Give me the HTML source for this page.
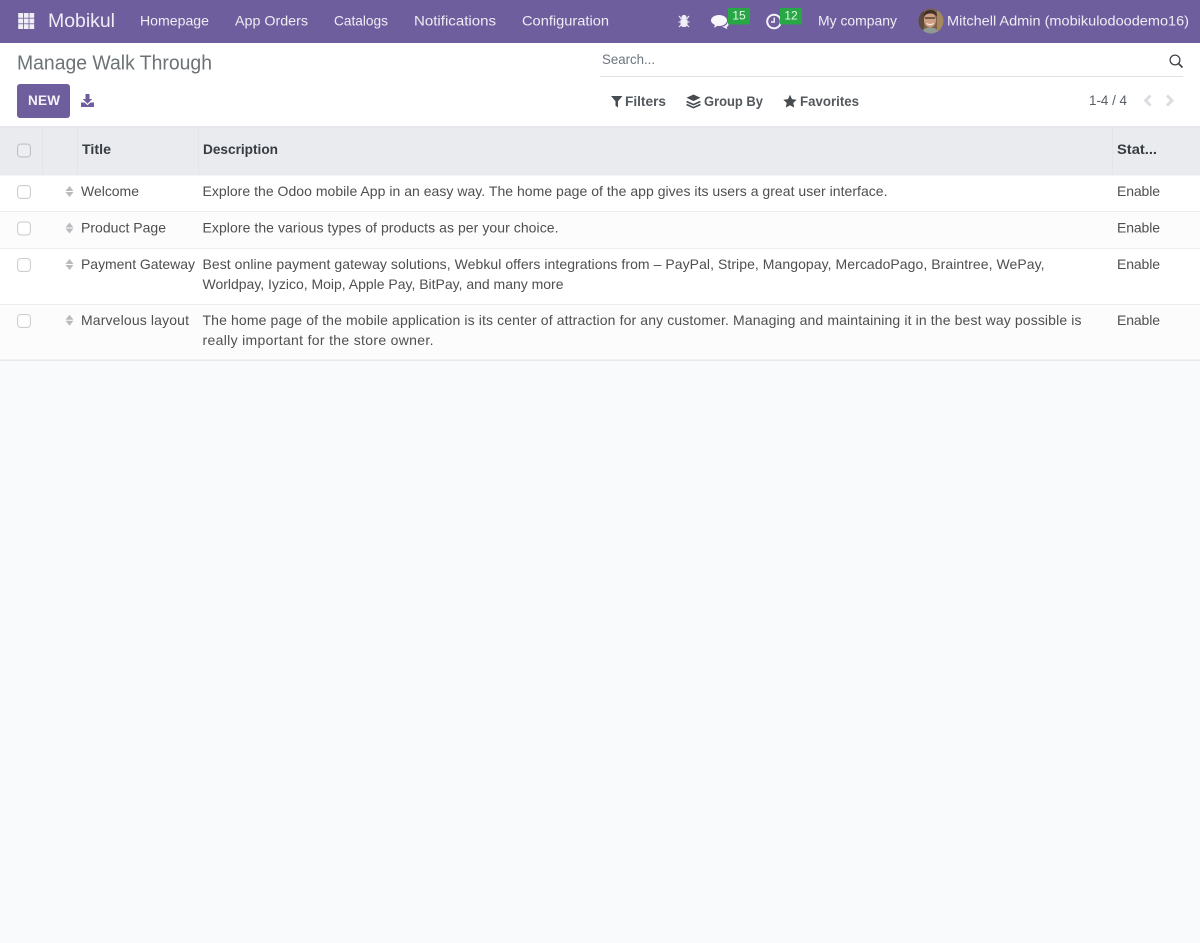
<!DOCTYPE html>
<html lang="en"><head><meta charset="utf-8"><title>Manage Walk Through</title>
<style>
html,body{margin:0;padding:0;width:1200px;height:943px;overflow:hidden;background:#f9fafb}
svg{display:block}
text{font-family:"Liberation Sans","DejaVu Sans",sans-serif;font-size:14px;fill:#4f4f4f}
.n{fill:#efecf4}
.h{font-weight:700;fill:#373c41}
.m{fill:#53585d;font-weight:700;font-size:13.5px}
</style></head><body>
<svg width="1200" height="943" viewBox="0 0 1200 943" xmlns="http://www.w3.org/2000/svg">
<rect width="1200" height="943" fill="#f9fafb"/>
<!-- navbar -->
<rect width="1200" height="43" fill="#6f5e9e"/>
<g fill="#f1eff6">
<rect x="18.200" y="13" width="4.800" height="4.800"/><rect x="23.800" y="13" width="4.800" height="4.800"/><rect x="29.400" y="13" width="4.800" height="4.800"/>
<rect x="18.200" y="18.600" width="4.800" height="4.800"/><rect x="23.800" y="18.600" width="4.800" height="4.800"/><rect x="29.400" y="18.600" width="4.800" height="4.800"/>
<rect x="18.200" y="24.200" width="4.800" height="4.800"/><rect x="23.800" y="24.200" width="4.800" height="4.800"/><rect x="29.400" y="24.200" width="4.800" height="4.800"/>
</g>
<text class="n" x="48" y="27" style="font-size:19px" textLength="67" lengthAdjust="spacingAndGlyphs">Mobikul</text>
<text class="n" x="140" y="25.500" textLength="69" lengthAdjust="spacingAndGlyphs">Homepage</text>
<text class="n" x="235" y="25.500" textLength="73" lengthAdjust="spacingAndGlyphs">App Orders</text>
<text class="n" x="334" y="25.500" textLength="54" lengthAdjust="spacingAndGlyphs">Catalogs</text>
<text class="n" x="414" y="25.500" textLength="82" lengthAdjust="spacingAndGlyphs">Notifications</text>
<text class="n" x="522" y="25.500" textLength="87" lengthAdjust="spacingAndGlyphs">Configuration</text>
<!-- bug -->
<g fill="#f1eff6" stroke="none">
<circle cx="684" cy="17.500" r="2.600"/>
<path d="M680.500 19.500h7v4.200q0 3.300-3.500 3.300t-3.500-3.300z"/>
</g>
<path d="M679 16l2.500 3M689 16l-2.500 3M678.500 22h3M686.500 22h3M679 27l2.200-2.200M689 27l-2.200-2.200" stroke="#f1eff6" stroke-width="1.100" fill="none"/>
<!-- chat -->
<path d="M719 15c4.700 0 8 2.500 8 5.500s-3.300 5.500-8 5.500l-1.700-.1-3.300 2 .9-3c-2.300-1-3.900-2.600-3.900-4.400 0-3 3.300-5.500 8-5.500z" fill="#f7f6fa"/>
<path d="M728 19.500c.6 3.500-2 6.500-6 7.300l2.500 1 2.800 1.500-.5-2.300c1.300-.8 2-2 2-3.300 0-1.700-.3-3.200-.8-4.200z" fill="#f1eff6"/>
<rect x="728" y="8" width="22" height="16.500" rx="1" fill="#28a745"/>
<text x="739" y="19.500" text-anchor="middle" style="font-size:12px;fill:#eaf6ec">15</text>
<!-- clock -->
<circle cx="774" cy="21.500" r="6.800" fill="none" stroke="#f4f2f8" stroke-width="2"/>
<path d="M774.200 17.500v4.500h-3.200" fill="none" stroke="#f4f2f8" stroke-width="1.400"/>
<rect x="780" y="8" width="22" height="16.500" rx="1" fill="#28a745"/>
<text x="791" y="19.500" text-anchor="middle" style="font-size:12px;fill:#eaf6ec">12</text>
<text class="n" x="818" y="25.500" textLength="79" lengthAdjust="spacingAndGlyphs">My company</text>
<!-- avatar -->
<clipPath id="av"><circle cx="931" cy="21" r="12.500"/></clipPath>
<g clip-path="url(#av)">
<rect x="918" y="8" width="26" height="26" fill="#7b6148"/>
<rect x="937" y="8" width="7" height="26" fill="#a5885f"/>
<rect x="918" y="8" width="6" height="26" fill="#5b4a3d"/>
<path d="M921 34c1-5 5-6.500 9-6.500s8 1.500 10 6.500z" fill="#8f9a94"/>
<ellipse cx="930" cy="20" rx="6" ry="7.500" fill="#cf9d80"/>
<path d="M923.500 17c0-5 3-7 7-7s6.500 2.500 6.500 6.500c-2-2.500-4-3-7-3s-4.500 1-6.500 3.500z" fill="#3d2f29"/>
<path d="M925 18h10" stroke="#3a2f2b" stroke-width="1.200"/>
<path d="M926.500 23.500q3.500 2.200 7 0" stroke="#f4ebe4" stroke-width="1.300" fill="none"/>
</g>
<text class="n" x="947" y="25.500" textLength="242" lengthAdjust="spacingAndGlyphs">Mitchell Admin (mobikulodoodemo16)</text>
<!-- control panel -->
<rect y="43" width="1200" height="84" fill="#fff"/>
<text x="17" y="69.500" style="font-size:20.500px;fill:#6b7377" textLength="195" lengthAdjust="spacingAndGlyphs">Manage Walk Through</text>
<rect x="600" y="76" width="583" height="1" fill="#dee2e6"/>
<text x="602" y="64" style="fill:#6c757d" textLength="53" lengthAdjust="spacingAndGlyphs">Search...</text>
<circle cx="1175" cy="60" r="4.900" fill="none" stroke="#3f4348" stroke-width="1.300"/>
<path d="M1178.500 63.500l4 4" stroke="#3f4348" stroke-width="1.700"/>
<rect x="17" y="84" width="53" height="34" rx="3" fill="#6f5e9e"/>
<text x="28" y="105" style="font-size:13.500px;font-weight:700;fill:#f5f3f8" textLength="32">NEW</text>
<!-- download -->
<path d="M85.500 94h4v5h2.800l-4.800 4.800-4.800-4.800h2.800z" fill="#6f5e9e"/>
<path d="M81 102.500h3.500l3 2.800 3-2.800h3.500v4.500h-13z" fill="#6f5e9e"/>
<!-- filters -->
<path d="M611 96h11.500l-4.500 5.200v6.300l-2.500-1.800v-4.500z" fill="#474c51"/>
<text class="m" x="625" y="106" textLength="41" lengthAdjust="spacingAndGlyphs">Filters</text>
<path d="M693.500 94.500l7 3.300-7 3.300-7-3.300z" fill="#474c51"/>
<path d="M687 100.800l6.500 3 6.500-3 .8 1.400-7.300 3.300-7.300-3.300zM687 103.800l6.500 3 6.500-3 .8 1.400-7.300 3.300-7.300-3.300z" fill="#474c51"/>
<text class="m" x="704" y="106" textLength="59" lengthAdjust="spacingAndGlyphs">Group By</text>
<path d="M790 94.800l2 4.300 4.700.6-3.400 3.200.9 4.700-4.200-2.300-4.200 2.300.9-4.700-3.400-3.200 4.700-.6z" fill="#474c51"/>
<text class="m" x="800" y="106" textLength="59" lengthAdjust="spacingAndGlyphs">Favorites</text>
<text x="1089" y="105" style="fill:#5a5f64" textLength="38" lengthAdjust="spacingAndGlyphs">1-4 / 4</text>
<path d="M1150.500 95.500l-5 5 5 5" fill="none" stroke="#dadcdf" stroke-width="2.800"/>
<path d="M1167 95.500l5 5-5 5" fill="none" stroke="#dadcdf" stroke-width="2.800"/>
<!-- table -->
<rect y="126" width="1200" height="2" fill="#e6e7ea"/>
<rect y="128" width="1200" height="47.500" fill="#e9ebef"/>
<rect x="42" y="128" width="1" height="47" fill="#e3e5e9"/>
<rect x="77" y="128" width="1" height="47" fill="#e3e5e9"/>
<rect x="198" y="128" width="1" height="47" fill="#e3e5e9"/>
<rect x="1112" y="128" width="1" height="47" fill="#e3e5e9"/>
<rect y="175.500" width="1200" height="184" fill="#fff"/>
<rect y="212" width="1200" height="36" fill="#fcfcfc"/>
<rect y="304" width="1200" height="56" fill="#fcfcfc"/>
<rect y="211" width="1200" height="1" fill="#ecedef"/>
<rect y="248" width="1200" height="1" fill="#ecedef"/>
<rect y="304" width="1200" height="1" fill="#ecedef"/>
<rect y="359.500" width="1200" height="1.500" fill="#e6e8ea"/>
<g fill="none" stroke="#cbced1" stroke-width="1.100">
<rect x="17.600" y="144.100" width="12.800" height="12.800" rx="3" fill="#eceef1" stroke="#bdc0c4"/>
<rect x="17.600" y="185.600" width="12.800" height="12.800" rx="3" fill="#fff"/>
<rect x="17.600" y="222.100" width="12.800" height="12.800" rx="3" fill="#fff"/>
<rect x="17.600" y="258.600" width="12.800" height="12.800" rx="3" fill="#fff"/>
<rect x="17.600" y="314.600" width="12.800" height="12.800" rx="3" fill="#fff"/>
</g>
<g fill="#b9bbbf">
<path d="M69.500 186l4 5h-8zM69.500 197l4-5h-8z"/>
<path d="M69.500 222.500l4 5h-8zM69.500 233.500l4-5h-8z"/>
<path d="M69.500 259l4 5h-8zM69.500 270l4-5h-8z"/>
<path d="M69.500 314.800l4 5h-8zM69.500 325.800l4-5h-8z"/>
</g>
<text class="h" x="82" y="154" textLength="29" lengthAdjust="spacingAndGlyphs">Title</text>
<text class="h" x="203" y="154" textLength="75" lengthAdjust="spacingAndGlyphs">Description</text>
<text class="h" x="1117" y="154" textLength="40" lengthAdjust="spacingAndGlyphs">Stat...</text>
<text x="81" y="196" textLength="58">Welcome</text>
<text x="202.500" y="196" textLength="685">Explore the Odoo mobile App in an easy way. The home page of the app gives its users a great user interface.</text>
<text x="1117" y="196" textLength="43">Enable</text>
<text x="81" y="232.500" textLength="85">Product Page</text>
<text x="202.500" y="232.500" textLength="356">Explore the various types of products as per your choice.</text>
<text x="1117" y="232.500" textLength="43">Enable</text>
<text x="81" y="269" textLength="114">Payment Gateway</text>
<text x="202.500" y="269" textLength="842">Best online payment gateway solutions, Webkul offers integrations from – PayPal, Stripe, Mangopay, MercadoPago, Braintree, WePay,</text>
<text x="202.500" y="289" textLength="361">Worldpay, Iyzico, Moip, Apple Pay, BitPay, and many more</text>
<text x="1117" y="269" textLength="43">Enable</text>
<text x="81" y="325" textLength="108">Marvelous layout</text>
<text x="202.500" y="325" textLength="879">The home page of the mobile application is its center of attraction for any customer. Managing and maintaining it in the best way possible is</text>
<text x="202.500" y="345" textLength="231">really important for the store owner.</text>
<text x="1117" y="325" textLength="43">Enable</text>
</svg>
</body></html>
